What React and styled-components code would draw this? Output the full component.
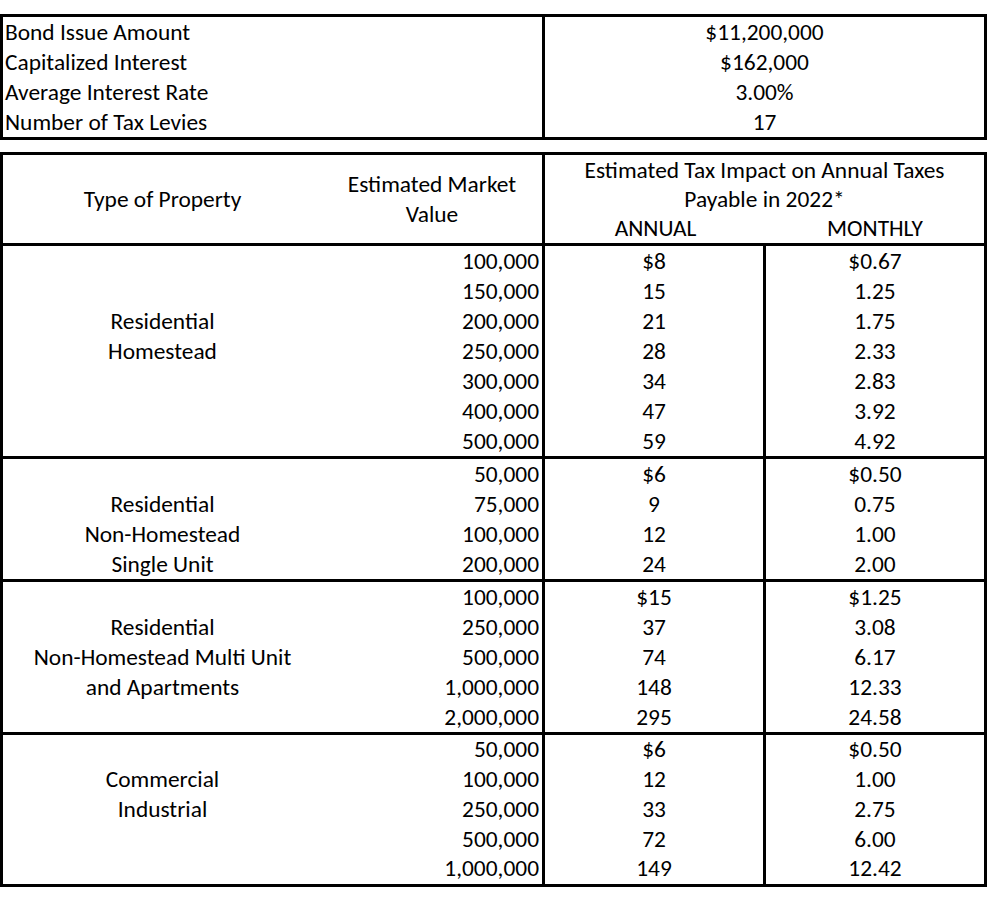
import React from 'react';
import styled, { createGlobalStyle } from 'styled-components';

const GlobalStyle = createGlobalStyle`
   body {
      margin: 0;
      background: #fff;
      font-family: Carlito, Lato, 'Liberation Sans', sans-serif;
      color: #000;
   }
`;

const Page = styled.div`
   width: 987px;
   padding-top: 14px;
   font-size: 23.4px;
`;

// 위쪽 요약 표
const SummaryBox = styled.div`
   border: 3px solid #000;
   display: grid;
   grid-template-columns: 542px 1fr;
   margin-bottom: 12px;
`;

const SummaryLabel = styled.div`
   border-right: 3px solid #000;
   height: 30px;
   line-height: 30px;
   padding-left: 2px;
   white-space: nowrap;
`;

const SummaryValue = styled.div`
   height: 30px;
   line-height: 30px;
   text-align: center;
`;

// 아래쪽 세금 표
const TaxTable = styled.div`
   border: 3px solid #000;
`;

const HeaderGrid = styled.div`
   display: grid;
   grid-template-columns: 319px 223px 221px 1fr;
   grid-template-rows: repeat(3, 29.4px);
   text-align: center;
   line-height: 30px;
`;

const HeaderCell = styled.div`
   grid-column: ${(props) => props.col};
   grid-row: ${(props) => props.row};
   display: flex;
   flex-direction: column;
   justify-content: center;
   align-items: center;
   white-space: nowrap;
   border-right: ${(props) => (props.divider ? '3px solid #000' : 'none')};
`;

const Group = styled.div`
   border-top: 3px solid #000;
`;

const Row = styled.div`
   display: grid;
   grid-template-columns: 319px 223px 221px 1fr;
   height: ${(props) => props.h || 30}px;
   line-height: ${(props) => props.h || 30}px;
`;

const TypeCell = styled.div`
   text-align: center;
   white-space: nowrap;
`;

const ValueCell = styled.div`
   text-align: right;
   padding-right: 3px;
   border-right: 3px solid #000;
`;

const ImpactCell = styled.div`
   text-align: center;
   border-right: ${(props) => (props.divider ? '3px solid #000' : 'none')};
`;

const summary = [
   ['Bond Issue Amount', '$11,200,000'],
   ['Capitalized Interest', '$162,000'],
   ['Average Interest Rate', '3.00%'],
   ['Number of Tax Levies', '17'],
];

const groups = [
   {
      h: 30,
      rows: [
         ['', '100,000', '$8', '$0.67'],
         ['', '150,000', '15', '1.25'],
         ['Residential', '200,000', '21', '1.75'],
         ['Homestead', '250,000', '28', '2.33'],
         ['', '300,000', '34', '2.83'],
         ['', '400,000', '47', '3.92'],
         ['', '500,000', '59', '4.92'],
      ],
   },
   {
      h: 30,
      rows: [
         ['', '50,000', '$6', '$0.50'],
         ['Residential', '75,000', '9', '0.75'],
         ['Non-Homestead', '100,000', '12', '1.00'],
         ['Single Unit', '200,000', '24', '2.00'],
      ],
   },
   {
      h: 30,
      rows: [
         ['', '100,000', '$15', '$1.25'],
         ['Residential', '250,000', '37', '3.08'],
         ['Non-Homestead Multi Unit', '500,000', '74', '6.17'],
         ['and Apartments', '1,000,000', '148', '12.33'],
         ['', '2,000,000', '295', '24.58'],
      ],
   },
   {
      h: 29.8,
      rows: [
         ['', '50,000', '$6', '$0.50'],
         ['Commercial', '100,000', '12', '1.00'],
         ['Industrial', '250,000', '33', '2.75'],
         ['', '500,000', '72', '6.00'],
         ['', '1,000,000', '149', '12.42'],
      ],
   },
];

const App = () => {
   return (
      <>
         <GlobalStyle />
         <Page>
            <SummaryBox>
               {summary.map(([label, value]) => (
                  <React.Fragment key={label}>
                     <SummaryLabel>{label}</SummaryLabel>
                     <SummaryValue>{value}</SummaryValue>
                  </React.Fragment>
               ))}
            </SummaryBox>
            <TaxTable>
               <HeaderGrid>
                  <HeaderCell col="1" row="1 / 4">
                     Type of Property
                  </HeaderCell>
                  <HeaderCell col="2" row="1 / 4" divider>
                     <span>Estimated Market</span>
                     <span>Value</span>
                  </HeaderCell>
                  <HeaderCell col="3 / 5" row="1">
                     Estimated Tax Impact on Annual Taxes
                  </HeaderCell>
                  <HeaderCell col="3 / 5" row="2">
                     Payable in 2022*
                  </HeaderCell>
                  <HeaderCell col="3" row="3">
                     ANNUAL
                  </HeaderCell>
                  <HeaderCell col="4" row="3">
                     MONTHLY
                  </HeaderCell>
               </HeaderGrid>
               {groups.map((group, gi) => (
                  <Group key={gi}>
                     {group.rows.map(([type, value, annual, monthly], ri) => (
                        <Row key={ri} h={group.h}>
                           <TypeCell>{type}</TypeCell>
                           <ValueCell>{value}</ValueCell>
                           <ImpactCell divider>{annual}</ImpactCell>
                           <ImpactCell>{monthly}</ImpactCell>
                        </Row>
                     ))}
                  </Group>
               ))}
            </TaxTable>
         </Page>
      </>
   );
};

export default App;
